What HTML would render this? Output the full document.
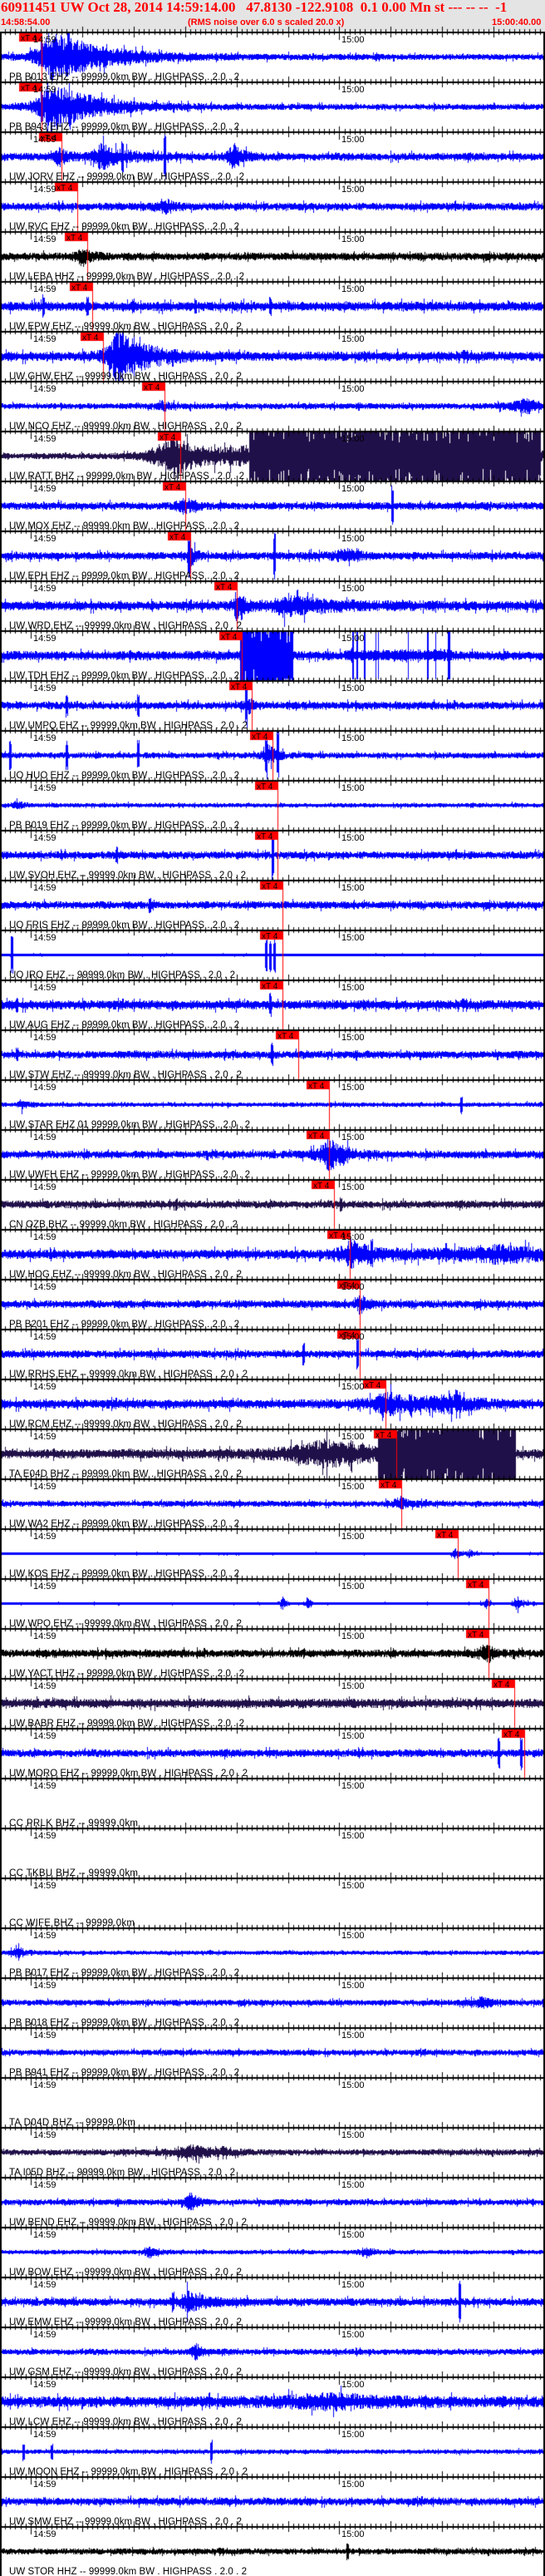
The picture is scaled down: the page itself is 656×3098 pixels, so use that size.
<!DOCTYPE html>
<html><head><meta charset="utf-8">
<style>
html,body{margin:0;padding:0;background:#fff;}
#wrap{position:relative;width:656px;height:3098px;overflow:hidden;background:#fff;}
#hdr{position:absolute;left:0;top:0;width:656px;height:37px;background:#e4e4e4;}
#t1{position:absolute;left:1px;top:-1px;font:bold 17px "Liberation Serif",serif;color:#f00;white-space:pre;}
.t2{position:absolute;top:21px;font:bold 11px "Liberation Sans",sans-serif;color:#f00;white-space:pre;}
canvas{position:absolute;left:0;top:0;}
svg{position:absolute;left:0;top:0;}
svg text{font-family:"Liberation Sans",sans-serif;fill:#000;}
</style></head><body>
<div id="wrap">
<div id="hdr">
<div id="t1">60911451 UW Oct 28, 2014 14:59:14.00   47.8130 -122.9108  0.1 0.00 Mn st --- -- --  -1</div>
<div class="t2" style="left:1px">14:58:54.00</div>
<div class="t2" style="left:226px">(RMS noise over 6.0 s scaled 20.0 x)</div>
<div class="t2" style="left:592px">15:00:40.00</div>
</div>
<canvas id="c" width="656" height="3098"></canvas>
<svg id="s" width="656" height="3098" xmlns="http://www.w3.org/2000/svg">
<g font-size="11.5" id="labels">
<text x="11" y="96" textLength="277">PB B013 EHZ -- 99999.0km BW . HIGHPASS . 2.0 . 2</text>
<text x="11" y="156" textLength="277">PB B943 EHZ -- 99999.0km BW . HIGHPASS . 2.0 . 2</text>
<text x="11" y="216" textLength="283">UW JORV EHZ -- 99999.0km BW . HIGHPASS . 2.0 . 2</text>
<text x="11" y="276" textLength="277">UW RVC EHZ -- 99999.0km BW . HIGHPASS . 2.0 . 2</text>
<text x="11" y="336" textLength="283">UW LEBA HHZ -- 99999.0km BW . HIGHPASS . 2.0 . 2</text>
<text x="11" y="396" textLength="280">UW EPW EHZ -- 99999.0km BW . HIGHPASS . 2.0 . 2</text>
<text x="11" y="456" textLength="280">UW GHW EHZ -- 99999.0km BW . HIGHPASS . 2.0 . 2</text>
<text x="11" y="516" textLength="280">UW NCO EHZ -- 99999.0km BW . HIGHPASS . 2.0 . 2</text>
<text x="11" y="576" textLength="283">UW RATT BHZ -- 99999.0km BW . HIGHPASS . 2.0 . 2</text>
<text x="11" y="636" textLength="277">UW MOX EHZ -- 99999.0km BW . HIGHPASS . 2.0 . 2</text>
<text x="11" y="696" textLength="277">UW EPH EHZ -- 99999.0km BW . HIGHPASS . 2.0 . 2</text>
<text x="11" y="756" textLength="280">UW WRD EHZ -- 99999.0km BW . HIGHPASS . 2.0 . 2</text>
<text x="11" y="816" textLength="277">UW TDH EHZ -- 99999.0km BW . HIGHPASS . 2.0 . 2</text>
<text x="11" y="876" textLength="287">UW UMPQ EHZ -- 99999.0km BW . HIGHPASS . 2.0 . 2</text>
<text x="11" y="936" textLength="277">UO HUO EHZ -- 99999.0km BW . HIGHPASS . 2.0 . 2</text>
<text x="11" y="996" textLength="277">PB B019 EHZ -- 99999.0km BW . HIGHPASS . 2.0 . 2</text>
<text x="11" y="1056" textLength="285">UW SVOH EHZ -- 99999.0km BW . HIGHPASS . 2.0 . 2</text>
<text x="11" y="1116" textLength="277">UO FRIS EHZ -- 99999.0km BW . HIGHPASS . 2.0 . 2</text>
<text x="11" y="1176" textLength="272">UO IRO EHZ -- 99999.0km BW . HIGHPASS . 2.0 . 2</text>
<text x="11" y="1236" textLength="277">UW AUG EHZ -- 99999.0km BW . HIGHPASS . 2.0 . 2</text>
<text x="11" y="1296" textLength="280">UW STW EHZ -- 99999.0km BW . HIGHPASS . 2.0 . 2</text>
<text x="11" y="1356" textLength="290">UW STAR EHZ 01 99999.0km BW . HIGHPASS . 2.0 . 2</text>
<text x="11" y="1416" textLength="290">UW UWFH EHZ -- 99999.0km BW . HIGHPASS . 2.0 . 2</text>
<text x="11" y="1476" textLength="275">CN OZB BHZ -- 99999.0km BW . HIGHPASS . 2.0 . 2</text>
<text x="11" y="1536" textLength="280">UW HOG EHZ -- 99999.0km BW . HIGHPASS . 2.0 . 2</text>
<text x="11" y="1596" textLength="277">PB B201 EHZ -- 99999.0km BW . HIGHPASS . 2.0 . 2</text>
<text x="11" y="1656" textLength="287">UW RRHS EHZ -- 99999.0km BW . HIGHPASS . 2.0 . 2</text>
<text x="11" y="1716" textLength="280">UW RCM EHZ -- 99999.0km BW . HIGHPASS . 2.0 . 2</text>
<text x="11" y="1776" textLength="280">TA E04D BHZ -- 99999.0km BW . HIGHPASS . 2.0 . 2</text>
<text x="11" y="1836" textLength="277">UW WA2 EHZ -- 99999.0km BW . HIGHPASS . 2.0 . 2</text>
<text x="11" y="1896" textLength="277">UW KOS EHZ -- 99999.0km BW . HIGHPASS . 2.0 . 2</text>
<text x="11" y="1956" textLength="280">UW WPO EHZ -- 99999.0km BW . HIGHPASS . 2.0 . 2</text>
<text x="11" y="2016" textLength="283">UW YACT HHZ -- 99999.0km BW . HIGHPASS . 2.0 . 2</text>
<text x="11" y="2076" textLength="283">UW BABR EHZ -- 99999.0km BW . HIGHPASS . 2.0 . 2</text>
<text x="11" y="2136" textLength="287">UW MORO EHZ -- 99999.0km BW . HIGHPASS . 2.0 . 2</text>
<text x="11" y="2196" textLength="155">CC PRLK BHZ -- 99999.0km</text>
<text x="11" y="2256" textLength="155">CC TKBU BHZ -- 99999.0km</text>
<text x="11" y="2316" textLength="151">CC WIFE BHZ -- 99999.0km</text>
<text x="11" y="2376" textLength="277">PB B017 EHZ -- 99999.0km BW . HIGHPASS . 2.0 . 2</text>
<text x="11" y="2436" textLength="277">PB B018 EHZ -- 99999.0km BW . HIGHPASS . 2.0 . 2</text>
<text x="11" y="2496" textLength="277">PB B941 EHZ -- 99999.0km BW . HIGHPASS . 2.0 . 2</text>
<text x="11" y="2556" textLength="152">TA D04D BHZ -- 99999.0km</text>
<text x="11" y="2616" textLength="272">TA I05D BHZ -- 99999.0km BW . HIGHPASS . 2.0 . 2</text>
<text x="11" y="2676" textLength="286">UW BEND EHZ -- 99999.0km BW . HIGHPASS . 2.0 . 2</text>
<text x="11" y="2736" textLength="280">UW BOW EHZ -- 99999.0km BW . HIGHPASS . 2.0 . 2</text>
<text x="11" y="2796" textLength="280">UW EMW EHZ -- 99999.0km BW . HIGHPASS . 2.0 . 2</text>
<text x="11" y="2856" textLength="280">UW GSM EHZ -- 99999.0km BW . HIGHPASS . 2.0 . 2</text>
<text x="11" y="2916" textLength="280">UW LCW EHZ -- 99999.0km BW . HIGHPASS . 2.0 . 2</text>
<text x="11" y="2976" textLength="287">UW MOON EHZ -- 99999.0km BW . HIGHPASS . 2.0 . 2</text>
<text x="11" y="3036" textLength="280">UW SMW EHZ -- 99999.0km BW . HIGHPASS . 2.0 . 2</text>
<text x="11" y="3096" textLength="286">UW STOR HHZ -- 99999.0km BW . HIGHPASS . 2.0 . 2</text>
</g>
<g id="dyn" font-size="11"></g>
</svg>
</div>
<script>
(function(){
var cv=document.getElementById('c'),g=cv.getContext('2d');
var seed=12345;function R(){seed=(seed*1103515245+12345)&0x7fffffff;return seed/0x7fffffff;}
var B='#0000ff',K='#000000',P='#20104a';
var T=[
[B,3,[[60,30,12,60]],[],[]],
[B,3,[[60,30,12,50]],[],[]],
[B,4,[[70,10,3,10],[120,13,8,30],[280,14,5,12]],[],[[198,28],[147,20]]],
[B,4,[[200,6,10,10]],[],[]],
[K,4,[[98,10,5,10]],[],[]],
[B,5,[],[],[[52,14],[105,12],[160,10],[235,10],[325,12]]],
[B,5,[[140,28,10,35]],[],[]],
[B,3,[[195,5,5,8],[636,7,20,10]],[],[]],
[P,3,[[205,26,15,30],[330,22,40,200]],[[300,650]],[]],
[B,4,[[220,10,5,10]],[],[[472,24]]],
[B,4,[[228,14,3,6],[415,7,15,15]],[],[[227,28],[330,28]]],
[B,5,[[283,14,3,12],[340,10,10,60]],[],[]],
[B,5,[],[[289,352]],[]],
[B,4,[[298,8,3,6]],[],[[296,26],[80,14],[166,14]]],
[B,3,[[322,12,5,10]],[],[[12,18],[80,18],[166,20],[320,28],[334,30]]],
[B,2,[[20,6,3,6]],[],[]],
[B,4,[],[],[[328,30],[140,10]]],
[B,4,[],[],[[180,10]]],
[B,1,[],[],[[14,24],[320,22],[325,22],[330,22]]],
[B,5,[],[],[[325,16],[20,10]]],
[B,4,[],[],[[327,14],[20,8]]],
[B,2,[[25,5,4,8]],[],[[555,12]]],
[B,4,[[395,18,10,20]],[],[]],
[P,4,[],[],[[212,8],[410,8]]],
[B,5,[[420,14,10,30],[600,8,60,60]],[],[[447,18]]],
[B,4,[[433,12,3,8]],[],[]],
[B,4,[],[],[[430,22],[365,14]]],
[B,5,[[462,12,10,25],[540,8,30,30]],[],[[493,14]]],
[P,5,[[390,14,40,60]],[[455,620]],[]],
[B,3,[[480,8,5,10]],[],[]],
[B,1,[[548,7,3,4],[565,5,3,4]],[],[]],
[B,1,[[340,6,3,4],[370,6,3,4],[585,6,3,4],[620,7,3,10]],[],[]],
[K,4,[[585,10,8,10]],[],[]],
[P,5,[],[],[]],
[B,4,[],[],[[600,22],[627,25]]],
null,null,null,
[B,2,[[20,6,5,10]],[],[]],
[B,3,[[580,6,10,10]],[],[]],
[B,3,[],[],[]],
null,
[P,3,[[230,7,20,30]],[],[]],
[B,3,[[228,12,4,8]],[],[]],
[B,2,[[180,6,5,8],[440,6,5,8]],[],[]],
[B,4,[[225,10,10,25]],[],[[553,30],[208,12]]],
[B,3,[[235,9,4,8]],[],[]],
[B,6,[[400,6,60,60]],[],[]],
[B,2,[],[],[[28,12],[62,10],[254,14]]],
[B,4,[],[],[]],
[K,3,[],[],[[418,10]]]
];
var BOX=[23,23,47,66,78,84,97,171,190,196,202,258,264,276,301,307,307,313,313,313,332,369,369,375,394,406,406,437,450,456,524,561,561,592,604];
for(var k=0;k<51;k++){
 var top=38+60*k,c=top+30,t=T[k];
 if(!t)continue;
 g.fillStyle=t[0];
 for(var x=1;x<655;x++){
  var a=t[1];
  for(var e=0;e<t[2].length;e++){var ev=t[2][e];a+= x<ev[0]?ev[1]*Math.exp(-(ev[0]-x)/ev[2]):ev[1]*Math.exp(-(x-ev[0])/ev[3]);}
  var u=0,d=0;
  for(var m=0;m<2;m++){var r1=R(),r2=R();var uu=a*(0.3+0.7*r1*r1),dd=a*(0.3+0.7*r2*r2);if(R()<0.05){uu*=1.8;dd*=1.8;}u=Math.max(u,uu);d=Math.max(d,dd);}
  for(var s=0;s<t[4].length;s++){if(Math.abs(x-t[4][s][0])<1.5){u=Math.max(u,t[4][s][1]*(0.6+0.4*R()));d=Math.max(d,t[4][s][1]*(0.6+0.4*R()));}}
  var sat=false;
  for(var q=0;q<t[3].length;q++){if(x>=t[3][q][0]&&x<=t[3][q][1])sat=true;}
  if(sat){u=29-(R()<0.12?R()*14:0);d=29-(R()<0.12?R()*14:0);}
  u=Math.round(Math.min(u,29));d=Math.round(Math.min(d,29));
  if(u<1)u=1;if(d<1)d=1;
  g.fillRect(x,c-u,1,u+d+1);
 }
 if(k==12){
  for(var x=415;x<545;x++){var u=Math.round(3+R()*4);if(R()<0.1)u=29;g.fillRect(x,c-u,1,2*u);}
 }
}
g.fillStyle='#000';
g.fillRect(0,38,2,3060);g.fillRect(654,38,2,3060);
var px=6.19;
for(var k=0;k<51;k++){
 var y=38+60*k;
 g.fillRect(0,y,656,2);
 for(var i=-6;i<=100;i++){
  var x=Math.round(37+i*px); if(x<1||x>655)continue;
  var sec=(i%60+60)%60;
  if(sec==0){g.fillRect(x,y-6,1,16);}
  else if(sec%10==0){g.fillRect(x,y-6,1,13);}
  else{g.fillRect(x,y-3,1,7);}
 }
}
var ns='http://www.w3.org/2000/svg',dyn=document.getElementById('dyn');
g.fillStyle='#f00';
for(var k=0;k<BOX.length;k++){
 var y=38+60*k,bx=BOX[k];
 g.fillRect(bx,y+2,27,10);
 g.fillRect(bx+27,y+2,1,58);
 var t=document.createElementNS(ns,'text');t.setAttribute('x',bx+2);t.setAttribute('y',y+11);t.setAttribute('font-size','10');t.textContent='xT 4';dyn.appendChild(t);
}
for(var k=0;k<51;k++){
 var y=38+60*k;
 var a=document.createElementNS(ns,'text');a.setAttribute('x',40);a.setAttribute('y',y+13);a.textContent='14:59';dyn.appendChild(a);
 var b=document.createElementNS(ns,'text');b.setAttribute('x',411);b.setAttribute('y',y+13);b.textContent='15:00';dyn.appendChild(b);
}
})();
</script>
</body></html>
